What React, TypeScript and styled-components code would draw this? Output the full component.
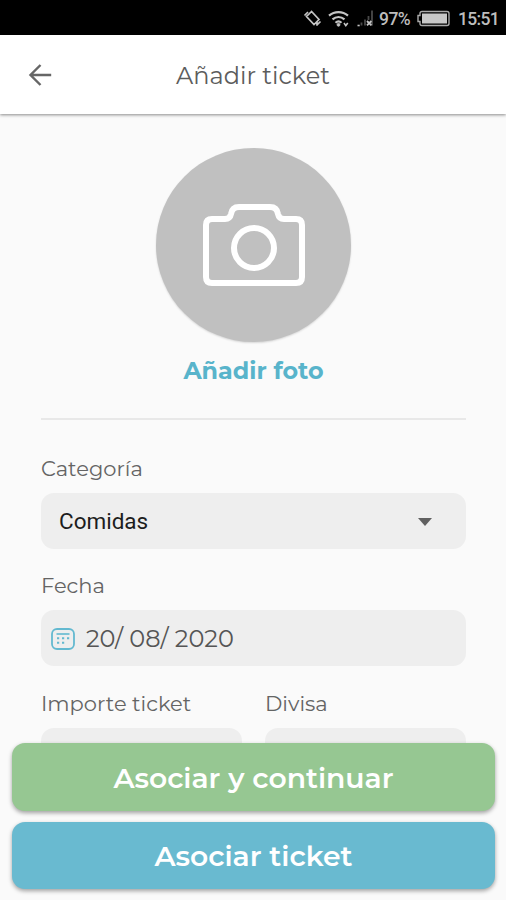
import React from "react";
import styled, { createGlobalStyle } from "styled-components";

const GlobalStyle = createGlobalStyle`
  *, *::before, *::after { box-sizing: border-box; }
  body { margin: 0; background: #fafafa; }
  button { font: inherit; border: 0; padding: 0; background: none; }
`;

const Screen = styled.div`
  position: relative;
  display: flex;
  flex-direction: column;
  width: 100%;
  height: 900px;
  overflow: hidden;
  background: #fafafa;
  color: #5c5c5c;
  font-family: Montserrat, Inter, "Open Sans", sans-serif;
`;

const StatusBar = styled.div`
  display: flex;
  flex: none;
  align-items: center;
  justify-content: flex-end;
  height: 35px;
  padding: 2px 7px 0 0;
  background: #000;
  color: #bdbdbd;
  font-family: Roboto, sans-serif;
  font-size: 17.5px;
  font-weight: 500;
  line-height: 20px;
`;

const StatusIcons = styled.svg`
  display: block;
  margin-right: 6px;
`;

const Percent = styled.span`
  letter-spacing: -0.6px;
  margin-right: 7px;
`;

const BatteryIcon = styled.svg`
  display: block;
  margin-right: 8px;
`;

const Clock = styled.span`
  letter-spacing: -0.7px;
`;

const AppBar = styled.header`
  display: grid;
  flex: none;
  grid-template-columns: 80px 1fr 80px;
  align-items: center;
  height: 79px;
  background: #fff;
  box-shadow: 0 1px 3px rgba(0, 0, 0, 0.45);
`;

const BackButton = styled.button`
  display: flex;
  justify-content: center;
  color: #666;
`;

const Title = styled.h1`
  margin: 2px 0 0;
  font-size: 24px;
  font-weight: 400;
  text-align: center;
  color: #5c5c5c;
`;

const Content = styled.main`
  display: flex;
  flex-direction: column;
  padding: 34px 40px 0 41px;
`;

const PhotoPicker = styled.div`
  display: flex;
  flex-direction: column;
  align-items: center;
  height: 272px;
  border-bottom: 2px solid #e8e8e8;
`;

const PhotoCircle = styled.div`
  display: flex;
  align-items: center;
  justify-content: center;
  width: 195px;
  height: 194px;
  padding-bottom: 1px;
  border-radius: 50%;
  background: #c0c0c0;
  box-shadow: 0 1px 2px rgba(0, 0, 0, 0.14);
`;

const PhotoLabel = styled.span`
  margin-top: 15px;
  font-size: 23.8px;
  font-weight: 700;
  line-height: 28px;
  color: #58b4cb;
`;

const Field = styled.div`
  display: flex;
  flex-direction: column;
  flex: 1;
`;

const Label = styled.span`
  height: 28px;
  margin-bottom: 10px;
  font-size: 21px;
  font-weight: 400;
  line-height: 27px;
  color: #646464;
`;

const InputBox = styled.div<{ $left: number }>`
  display: flex;
  align-items: center;
  height: 56px;
  padding: 1px 34px 0 ${(p) => p.$left}px;
  border-radius: 13px;
  background: #eee;
`;

const Form = styled.form`
  display: flex;
  flex-direction: column;
  gap: 23.4px;
  padding-top: 35px;
`;

const FieldRow = styled.div`
  display: grid;
  grid-template-columns: 201px 201px;
  gap: 23px;
`;

const SelectValue = styled.span`
  flex: 1;
  padding-bottom: 2px;
  font-family: Roboto, sans-serif;
  font-size: 22.5px;
  color: #1d1d1d;
`;

const DateValue = styled.span`
  margin-left: 11px;
  font-size: 24px;
  font-weight: 400;
  color: #555;
`;

const Actions = styled.div`
  position: absolute;
  right: 11px;
  bottom: 11px;
  left: 12px;
  display: flex;
  flex-direction: column;
  gap: 11px;
`;

const ActionButton = styled.button<{ $color: string; $height: number }>`
  height: ${(p) => p.$height}px;
  padding-top: 1px;
  border-radius: 13px;
  background: ${(p) => p.$color};
  box-shadow: 0 2px 4px rgba(0, 0, 0, 0.36);
  color: #fff;
  font-size: 28.2px;
  font-weight: 600;
`;

export default function App() {
  return (
    <>
      <GlobalStyle />
      <Screen>
        <StatusBar>
          <StatusIcons width="70" height="20" viewBox="0 0 70 20" fill="none" stroke="#c4c4c4">
            <path d="m8.5 2.5-5 5 7.5 8 5-5-7.5-8ZM1.5 6.5 5 3M14 15.8l3.5-3.3M14 12v4.8" strokeWidth="1.7" />
            <path d="M26 6.7c5.5-4.8 13.5-4.8 19 0M29.5 10.4c3.6-3.2 8.4-3.2 12 0M32.5 13.8c1.8-1.6 4.2-1.6 6 0" strokeWidth="2.2" />
            <circle cx="35.5" cy="15.8" r="1.4" fill="#c4c4c4" />
            <path d="m41 14 1.8 2.6 2-2.6" strokeWidth="1.6" />
            <path d="M58.5 16.5v-3M62 16.5v-6M65.5 11V7M69 1.5v15" stroke="#4a4a4a" strokeWidth="1.8" />
            <path d="M54.5 16.5h2.2" strokeWidth="1.6" />
            <path d="m64 12 4.4 4.4m0-4.4L64 16.4" strokeWidth="1.8" />
          </StatusIcons>
          <Percent>97%</Percent>
          <BatteryIcon width="33" height="17" viewBox="0 0 33 17">
            <path d="M5 1.5h25q2 0 2 2v10q0 2-2 2H5q-2 0-2-2v-2H1v-6h2v-2q0-2 2-2Z" fill="none" stroke="#aaa" strokeWidth="1.4" />
            <rect x="5" y="3.5" width="25" height="10" fill="#c8c8c8" />
          </BatteryIcon>
          <Clock>15:51</Clock>
        </StatusBar>

        <AppBar>
          <BackButton aria-label="Atrás">
            <svg width="24" height="24" viewBox="0 0 24 24" fill="none" stroke="currentColor" strokeWidth="2.4">
              <path d="M23.2 12H2.8M12.5 2 2.5 12l10 10" />
            </svg>
          </BackButton>
          <Title>Añadir ticket</Title>
        </AppBar>

        <Content>
          <PhotoPicker>
            <PhotoCircle>
              <svg width="102" height="82" viewBox="0 0 102 82" fill="none" stroke="#fff" strokeWidth="6">
                <path d="M9 15h13q5 0 6-5 1-7 8-7h31q7 0 8 7 1 5 6 5h12q6 0 6 6v52q0 6-6 6H9q-6 0-6-6V21q0-6 6-6Z" />
                <circle cx="51" cy="44" r="20" />
              </svg>
            </PhotoCircle>
            <PhotoLabel>Añadir foto</PhotoLabel>
          </PhotoPicker>

          <Form>
            <Field>
              <Label>Categoría</Label>
              <InputBox $left={18}>
                <SelectValue>Comidas</SelectValue>
                <svg width="14" height="8" viewBox="0 0 14 8">
                  <path d="M0 0h14L7 8Z" fill="#606060" />
                </svg>
              </InputBox>
            </Field>
            <Field>
              <Label>Fecha</Label>
              <InputBox $left={10}>
                <svg width="24" height="22" viewBox="0 0 24 22" fill="none" stroke="#63b9d0">
                  <rect x="1" y="1" width="22" height="20" rx="5" strokeWidth="1.8" />
                  <path d="M5.5 6h13" strokeWidth="1.6" />
                  <path d="M6 10.3h12.5M6 14.8h8" strokeWidth="2" strokeDasharray="2.2 2.8" />
                </svg>
                <DateValue>20/ 08/ 2020</DateValue>
              </InputBox>
            </Field>
            <FieldRow>
              <Field>
                <Label>Importe ticket</Label>
                <InputBox $left={18} />
              </Field>
              <Field>
                <Label>Divisa</Label>
                <InputBox $left={18} />
              </Field>
            </FieldRow>
          </Form>
        </Content>

        <Actions>
          <ActionButton $color="#96c792" $height={68}>Asociar y continuar</ActionButton>
          <ActionButton $color="#69bad0" $height={67}>Asociar ticket</ActionButton>
        </Actions>
      </Screen>
    </>
  );
}
